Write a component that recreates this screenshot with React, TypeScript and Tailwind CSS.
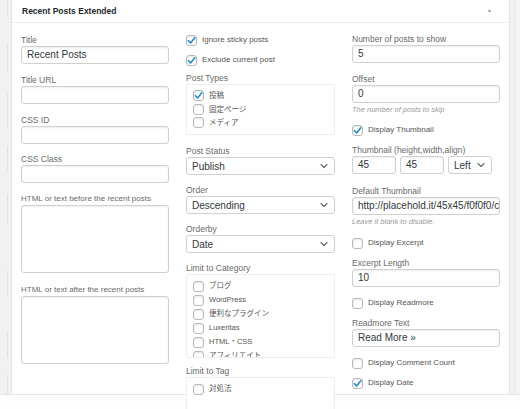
import React from 'react'

const font = { fontFamily: '"Liberation Sans", "Noto Sans CJK JP", Arial, sans-serif' }

function Check({ on }: { on?: boolean }) {
  return (
    <span className="relative inline-block h-[11px] w-[11px] shrink-0 rounded-[3px] border border-[#b4b9be] bg-white shadow-[inset_0_1px_2px_rgba(0,0,0,0.1)]">
      {on && (
        <svg className="absolute -left-[1px] -top-[1px] h-[11px] w-[11px]" viewBox="0 0 12 12" fill="none">
          <path d="M2.6 6.2l2.4 2.5L9.6 3" stroke="#1e8cbe" strokeWidth={1.7} strokeLinecap="round" strokeLinejoin="round" />
        </svg>
      )}
    </span>
  )
}

function CheckRow({ label, on, className = '' }: { label: string; on?: boolean; className?: string }) {
  return (
    <div className={`flex h-[14px] items-center gap-[5px] text-[8px] text-[#555] ${className}`}>
      <Check on={on} />
      <span>{label}</span>
    </div>
  )
}

function Label({ children, className = '' }: { children: React.ReactNode; className?: string }) {
  return <div className={`mb-[1px] h-[10px] whitespace-nowrap text-[8.5px] leading-[10px] text-[#6a6a6a] ${className}`}>{children}</div>
}

function Field({ value = '', className = '' }: { value?: string; className?: string }) {
  return (
    <div
      className={`h-[18px] overflow-hidden whitespace-nowrap rounded-[3px] border border-[#d0d0d0] bg-white px-[5px] text-[10px] leading-[16px] text-[#32373c] shadow-[inset_0_1px_2px_rgba(0,0,0,0.07)] ${className}`}
    >
      {value}
    </div>
  )
}

function Select({ value, className = '' }: { value: string; className?: string }) {
  return (
    <div
      className={`flex h-[18px] items-center justify-between rounded-[3px] border border-[#d0d0d0] bg-white pl-[5px] pr-[6px] text-[10px] text-[#32373c] ${className}`}
    >
      <span>{value}</span>
      <svg className="h-[6px] w-[8px]" viewBox="0 0 8 6" fill="none">
        <path d="M1 1.5l3 3 3-3" stroke="#666" strokeWidth={1.1} strokeLinecap="round" strokeLinejoin="round" />
      </svg>
    </div>
  )
}

function Help({ children, className = '' }: { children: React.ReactNode; className?: string }) {
  return <div className={`h-[10px] text-[7.5px] italic leading-[10px] text-[#999] ${className}`}>{children}</div>
}

function ListBox({ items, checked = [], className = '' }: { items: string[]; checked?: number[]; className?: string }) {
  return (
    <div className={`overflow-hidden border border-[#eee] bg-white px-[6px] ${className}`}>
      {items.map((it, i) => (
        <div key={it} className="flex h-[14px] items-center gap-[5px] text-[7.5px] text-[#555]">
          <Check on={checked.includes(i)} />
          <span>{it}</span>
        </div>
      ))}
    </div>
  )
}

export default function App() {
  return (
    <div className="h-[409px] w-[520px] overflow-hidden bg-[#fdfdfd]" style={font}>
      <div className="flex h-[395px] border-b border-[#e5e5e5] bg-[#f1f1f1]">
        {/* left edge of the neighbouring box */}
        <div className="flex w-[11px] flex-col pl-[7px]">
          <div className="h-[15px] border-l border-[#e2e2e2]" />
          <div className="mt-[28px] h-[29px] border-l border-[#e2e2e2]" />
          <div className="mt-[23px] h-[35px] border-l border-[#e2e2e2]" />
          <div className="mt-[18px] h-[25px] border-l border-[#e2e2e2]" />
          <div className="mt-[24px] h-[30px] border-l border-[#e2e2e2]" />
          <div className="mt-[48px] h-[25px] border-l border-[#e2e2e2]" />
          <div className="mt-[37px] h-[26px] border-l border-[#e2e2e2]" />
          <div className="mt-[17px] h-[20px] border-l border-[#e2e2e2]" />
        </div>

        {/* widget panel */}
        <div className="flex w-[499px] flex-col border-x border-[#e5e5e5] bg-white">
          <div className="flex h-[23px] shrink-0 items-center justify-between border-b border-[#eee] pl-[10px] pr-[17px]">
            <span className="text-[8.5px] font-bold text-[#23282d]">Recent Posts Extended</span>
            <span className="text-[5px] text-[#999]">▲</span>
          </div>

          <div className="grid grid-cols-[148px_149px_148px] gap-x-[17px] pl-[9px] pt-[12px]">
            {/* column 1 */}
            <div>
              <Label>Title</Label>
              <Field value="Recent Posts" />
              <Label className="mt-[11px]">Title URL</Label>
              <Field />
              <Label className="mt-[11px]">CSS ID</Label>
              <Field />
              <Label className="mt-[10px]">CSS Class</Label>
              <Field />
              <Label className="mt-[11px] text-[8px]">HTML or text before the recent posts</Label>
              <Field className="h-[68px]" />
              <Label className="mt-[12px] text-[8px]">HTML or text after the recent posts</Label>
              <Field className="h-[68px]" />
            </div>

            {/* column 2 */}
            <div>
              <CheckRow label="Ignore sticky posts" on className="mt-[-2px]" />
              <CheckRow label="Exclude current post" on className="mt-[6px]" />
              <Label className="mt-[6px]">Post Types</Label>
              <ListBox className="h-[51px] py-[4px] [&>div]:h-[13.5px]" items={['投稿', '固定ページ', 'メディア']} checked={[0]} />
              <Label className="mt-[11px]">Post Status</Label>
              <Select value="Publish" />
              <Label className="mt-[10px]">Order</Label>
              <Select value="Descending" />
              <Label className="mt-[10px]">Orderby</Label>
              <Select value="Date" />
              <Label className="mt-[10px]">Limit to Category</Label>
              <ListBox
                className="h-[84px] pt-[4px]"
                items={['ブログ', 'WordPress', '便利なプラグイン', 'Luxeritas', 'HTML・CSS', 'アフィリエイト']}
              />
              <Label className="mt-[8px]">Limit to Tag</Label>
              <ListBox className="h-[40px] pt-[4px]" items={['対処法']} />
            </div>

            {/* column 3 */}
            <div>
              <Label className="mt-[-1px]">Number of posts to show</Label>
              <Field value="5" />
              <Label className="mt-[11px]">Offset</Label>
              <Field value="0" />
              <Help className="mt-[2px]">The number of posts to skip</Help>
              <CheckRow label="Display Thumbnail" on className="mt-[8px]" />
              <Label className="mt-[8px]">Thumbnail (height,width,align)</Label>
              <div className="flex gap-[4px]">
                <Field value="45" className="w-[44px]" />
                <Field value="45" className="w-[44px]" />
                <Select value="Left" className="w-[44px]" />
              </div>
              <Label className="mt-[12px]">Default Thumbnail</Label>
              <Field value="http://placehold.it/45x45/f0f0f0/ccc" />
              <Help className="mt-[2px]">Leave it blank to disable.</Help>
              <CheckRow label="Display Excerpt" className="mt-[9px]" />
              <Label className="mt-[8px]">Excerpt Length</Label>
              <Field value="10" />
              <CheckRow label="Display Readmore" className="mt-[9px]" />
              <Label className="mt-[8px]">Readmore Text</Label>
              <Field value="Read More »" />
              <CheckRow label="Display Comment Count" className="mt-[9px]" />
              <CheckRow label="Display Date" on className="mt-[6px]" />
            </div>
          </div>
        </div>

        {/* right neighbouring strip */}
        <div className="ml-[5px] w-[5px] border-l border-[#e8e8e8] bg-[#f6f6f6]" />
      </div>
    </div>
  )
}
